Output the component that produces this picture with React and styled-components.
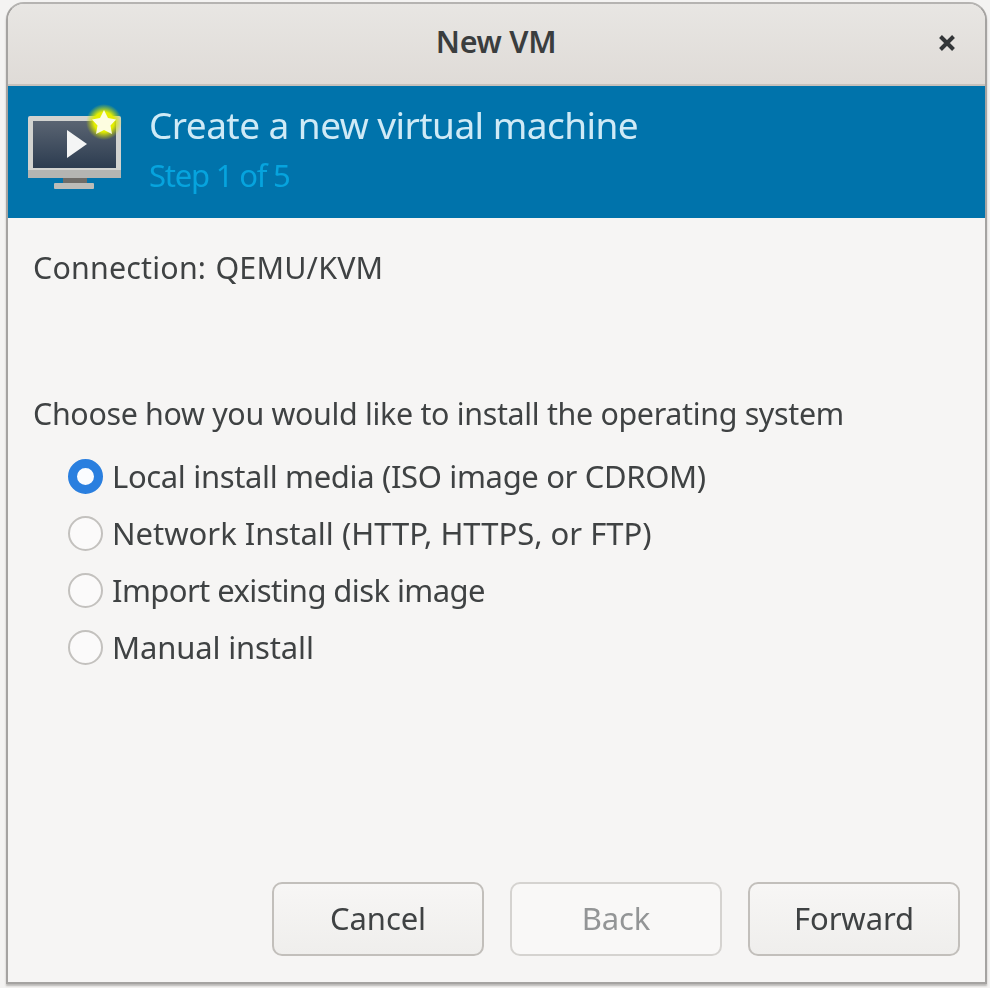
import styled, { createGlobalStyle } from "styled-components";

const GlobalStyle = createGlobalStyle`
	html, body {
		margin: 0;
		background: #f4f3f2;
	}
	body {
		font-family: "Noto Sans", "Open Sans", "Liberation Sans", sans-serif;
	}
`;

// the reference is a slightly soft capture
const Screen = styled.div`
	width: 990px;
	height: 988px;
	padding: 2px 3px 4px 6px;
	box-sizing: border-box;
	overflow: hidden;
	filter: blur(0.5px);
`;

const Window = styled.div`
	height: 100%;
	display: flex;
	flex-direction: column;
	box-sizing: border-box;
	border: 2px solid #a5a3a1;
	border-top-color: #b5b3b1;
	border-radius: 18px 18px 0 0;
	background: #f6f5f4;
	box-shadow: 0 2px 2px #b9b7b5;
	overflow: hidden;
`;

const TitleBar = styled.div`
	height: 82px;
	flex: none;
	display: flex;
	align-items: center;
	justify-content: center;
	padding-bottom: 6px;
	position: relative;
	box-sizing: border-box;
	background: linear-gradient(#e8e6e3, #dfdbd7);
	border-bottom: 2px solid #c6c1bc;
`;

const Title = styled.div`
	font-size: 30.5px;
	font-weight: 600;
	letter-spacing: -0.3px;
	color: #3a3d3e;
	margin-right: 1px;
`;

const CloseButton = styled.svg`
	position: absolute;
	right: 28px;
	top: 29px;
	width: 20px;
	height: 20px;
`;

const Banner = styled.div`
	height: 132px;
	flex: none;
	display: flex;
	align-items: flex-start;
	padding: 18px 0 0 18px;
	box-sizing: border-box;
	background: #0073ab;
`;

const BannerIcon = styled.svg`
	width: 100px;
	height: 92px;
	flex: none;
`;

const BannerText = styled.div`
	margin-left: 23px;
	display: flex;
	flex-direction: column;
`;

const BannerTitle = styled.div`
	margin-top: -2px;
	font-size: 37px;
	line-height: 46px;
	letter-spacing: -0.55px;
	color: #cfeaf6;
`;

const BannerStep = styled.div`
	margin-top: 7px;
	font-size: 31px;
	line-height: 40px;
	letter-spacing: -1.2px;
	color: #06a4de;
`;

const Content = styled.div`
	flex: 1;
	display: flex;
	flex-direction: column;
	padding: 28px 25px 0 25px;
`;

const Label = styled.div`
	font-size: 30.4px;
	line-height: 44px;
	letter-spacing: -0.32px;
	color: #3f4243;
	white-space: pre;
`;

const ConnectionLabel = styled(Label)`
	letter-spacing: 0.2px;
	word-spacing: -3.5px;
`;

const ChooseLabel = styled(Label)`
	margin-top: 102px;
`;

const RadioList = styled.div`
	margin-top: 18px;
	padding-left: 35px;
	display: flex;
	flex-direction: column;
	gap: 13px;
`;

const RadioRow = styled.div`
	display: flex;
	align-items: center;
	gap: 9px;
	height: 44px;
`;

const RadioDot = styled.div`
	width: 35px;
	height: 35px;
	flex: none;
	box-sizing: border-box;
	border-radius: 50%;
	background: ${(p) => (p.$checked ? "#fafcff" : "#fbfafa")};
	border: ${(p) => (p.$checked ? "9px solid #2a7fdf" : "2px solid #c3c1be")};
`;

const RadioLabel = styled(Label)`
	font-size: 31px;
	letter-spacing: ${(p) => p.$spacing}px;
`;

const ButtonRow = styled.div`
	margin-top: auto;
	margin-bottom: 26px;
	display: flex;
	justify-content: flex-end;
	gap: 26px;
`;

const Button = styled.div`
	width: 212px;
	height: 74px;
	padding-bottom: 2px;
	box-sizing: border-box;
	display: flex;
	align-items: center;
	justify-content: center;
	border: 2px solid ${(p) => (p.$disabled ? "#d5d3d0" : "#c2bfbb")};
	border-radius: 10px;
	background: ${(p) => (p.$disabled ? "#f9f8f7" : "linear-gradient(#f7f6f5, #efeeec)")};
	font-size: 31px;
	letter-spacing: -0.1px;
	color: ${(p) => (p.$disabled ? "#939596" : "#3f4243")};
`;

const options = [
	{ text: "Local install media (ISO image or CDROM)", checked: true, spacing: -0.35 },
	{ text: "Network Install (HTTP, HTTPS, or FTP)", spacing: 0 },
	{ text: "Import existing disk image", spacing: -0.6 },
	{ text: "Manual install", spacing: -0.15 },
];

function VmIcon() {
	return (
		<BannerIcon viewBox="0 0 100 92">
			<defs>
				<linearGradient id="screen" x1="0" y1="0" x2="0" y2="1">
					<stop offset="0" stopColor="#5a6472" />
					<stop offset="1" stopColor="#2c3c50" />
				</linearGradient>
				<radialGradient id="glow">
					<stop offset="0.55" stopColor="#e4ee00" />
					<stop offset="1" stopColor="#c8dc00" stopOpacity="0" />
				</radialGradient>
			</defs>
			<rect x="2" y="12" width="93" height="62" rx="2" fill="#d2d3d0" />
			<rect x="2" y="66" width="93" height="8" fill="#b4b5b2" />
			<rect x="7" y="17" width="83" height="47" fill="url(#screen)" />
			<path d="M41 26 L61 40 L41 54 Z" fill="#f4f5f5" />
			<rect x="37" y="74" width="24" height="6" fill="#6e6c68" />
			<rect x="28" y="79" width="40" height="6" rx="1" fill="#bcbcb8" />
			<circle cx="78" cy="18" r="18" fill="url(#glow)" />
			<path d="M78 6 L82 14 L90 15.5 L84.5 21.5 L86 30 L78 26 L70 30 L71.5 21.5 L66 15.5 L74 14 Z" fill="#fdfde0" />
		</BannerIcon>
	);
}

export default function App() {
	return (
		<>
			<GlobalStyle />
			<Screen>
				<Window>
					<TitleBar>
						<Title>New VM</Title>
						<CloseButton viewBox="0 0 20 20">
							<path d="M3.5 3.5 L16.5 16.5 M16.5 3.5 L3.5 16.5" stroke="#333638" strokeWidth="4" />
						</CloseButton>
					</TitleBar>
					<Banner>
						<VmIcon />
						<BannerText>
							<BannerTitle>Create a new virtual machine</BannerTitle>
							<BannerStep>Step 1 of 5</BannerStep>
						</BannerText>
					</Banner>
					<Content>
						<ConnectionLabel>Connection:  QEMU/KVM</ConnectionLabel>
						<ChooseLabel>Choose how you would like to install the operating system</ChooseLabel>
						<RadioList>
							{options.map((o) => (
								<RadioRow key={o.text}>
									<RadioDot $checked={o.checked} />
									<RadioLabel $spacing={o.spacing}>{o.text}</RadioLabel>
								</RadioRow>
							))}
						</RadioList>
						<ButtonRow>
							<Button>Cancel</Button>
							<Button $disabled>Back</Button>
							<Button>Forward</Button>
						</ButtonRow>
					</Content>
				</Window>
			</Screen>
		</>
	);
}
